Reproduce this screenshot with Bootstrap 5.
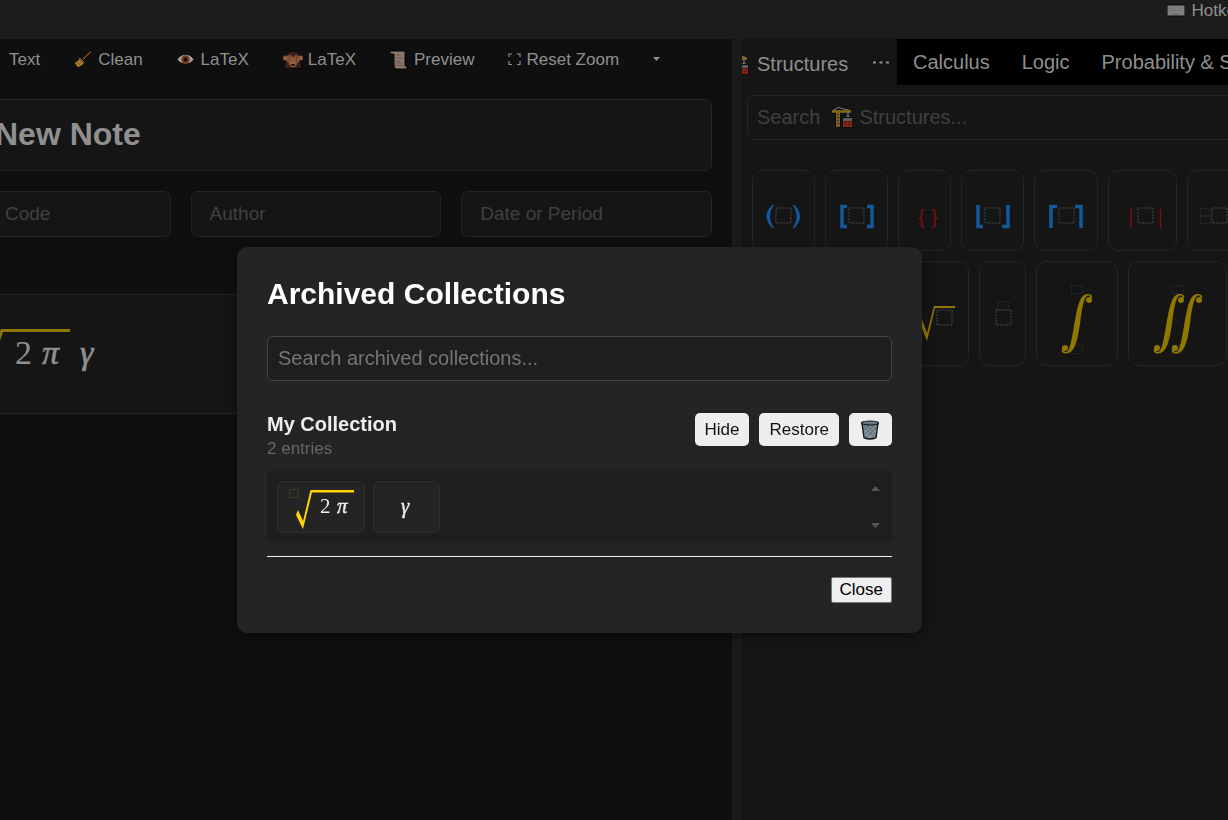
<!DOCTYPE html>
<html lang="en" data-bs-theme="dark">
<head>
<meta charset="utf-8">
<meta name="viewport" content="width=device-width, initial-scale=1">
<title>New Note</title>
<link href="https://cdn.jsdelivr.net/npm/bootstrap@5.3.0/dist/css/bootstrap.min.css" rel="stylesheet">
<style>
  body { background: #0f0f0f; color: #8f8f8f; font-family: "Liberation Sans", Arial, sans-serif; font-size: 17px; line-height: 20px; }
  button, input { font-family: inherit; }
  svg { display: block; flex: none; }
  .topbar { background: #1c1c1c; height: 39px; padding-top: 1px; }
  .hotkeys { color: #8f8f8f; margin-right: -25px; gap: 7px; }
  .editor { flex: 601 1 0; min-width: 0; }
  .splitter { width: 10px; background: #1a1a1a; }
  .library { flex: 399 1 0; min-width: 0; background: #151515; }
  .toolbar { height: 60px; padding: 11px 0 0 9px; gap: 34px; }
  .tool { border: 0; padding: 0; background: none; color: #8f8f8f; gap: 5px; font-size: 17px; line-height: 20px; white-space: nowrap; }
  .note { margin: 0 20px 0 -20px; }
  .field { background: #151515; border: 1px solid #242424; border-radius: 7px; color: #8f8f8f; min-width: 0; }
  .field::placeholder { color: #404040; opacity: 1; }
  .note-title { height: 72px; padding: 0 14px 2px; font-size: 32px; font-weight: 700; }
  .meta { display: grid; grid-template-columns: 19fr 25fr 25fr; gap: 20px; margin: 20px 0 57px; }
  .meta .field { height: 46px; padding: 0 18px; font-size: 19px; }
  .meta .field:first-child { padding-left: 24px; }
  .formula { height: 120px; background: #151515; border: 1px solid #242424; padding-left: 19px; }
  .mathtext { font-family: "Liberation Serif", serif; }
  .tabs { background: #000; height: 46px; }
  .tab { border: 0; padding: 0 16px; background: none; color: #8f8f8f; font-size: 20px; line-height: 46px; white-space: nowrap; }
  .tab-current { background: #151515; width: 155px; padding: 4px 0 0; gap: 8px; }
  .lookup { padding: 10px 0 30px 5px; margin-right: -10px; }
  .lookup .field { height: 45px; padding: 0 10px; font-size: 20px; }
  .hint { position: absolute; inset: 10px auto 32px 15px; color: #404040; font-size: 20px; gap: 7px; pointer-events: none; }
  .tiles { gap: 10px; padding-left: 10px; margin-bottom: 10px; overflow: hidden; }
  .tile { border: 1px solid #242424; border-radius: 10px; background: none; padding: 0; flex: none; }
  .slot { fill: none; stroke: #2c2c2c; stroke-width: 2; stroke-dasharray: 2 1; }
  .slot-sm { fill: none; stroke: #272727; stroke-dasharray: 2 1; }
  .blue { fill: none; stroke: #13599a; stroke-width: 3.500; }
  .red { fill: none; stroke: #7a0e12; }
  .gold { fill: none; stroke: #8f7800; }
  .veil { position: fixed; inset: 0; padding: 247px 69px 0 0; }
  .dialog-box { width: 685px; background: #242424; border-radius: 10px; padding: 29px 30px 30px; box-shadow: 0 4px 12px #00000066; color: #eee; }
  .dialog-box h2 { font-size: 30px; line-height: 36px; font-weight: 700; color: #fff; margin: 0 0 24px; }
  .archive-search { height: 45px; background: #1e1e1e; border: 1px solid #444; border-radius: 6px; padding: 0 10px; font-size: 20px; color: #eee; }
  .archive-search::placeholder { color: #757575; opacity: 1; }
  .entry-head { margin-top: 31px; height: 59px; }
  .entry-head h3 { font-size: 20px; line-height: 24px; font-weight: 700; margin: 0; color: #eee; }
  .count { color: #666; line-height: 26px; }
  .actions { gap: 10px; padding-top: 1px; }
  .light { border: 0; border-radius: 5px; background: #eee; color: #111; height: 33px; padding: 0 10px; line-height: 33px; }
  .entries { background: #1e1e1e; border-radius: 5px; padding: 10px; gap: 8px; }
  .entry { background: #242424; border: 1px solid #2d2d2d; border-radius: 5px; height: 52px; padding: 0; color: #eee; }
  .rule { border-top: 1px solid #eee; margin: 13px 0 20px; }
  .close-btn { background: #efefef; color: #000; border: 1px solid #767676; border-radius: 2px; height: 26px; padding: 0 8px; line-height: 22px; }
</style>
<script src="https://cdn.jsdelivr.net/npm/bootstrap@5.3.0/dist/js/bootstrap.bundle.min.js"></script>
</head>
<body class="vh-100 overflow-hidden d-flex flex-column">
<svg width="0" height="0" class="position-absolute" aria-hidden="true">
  <symbol id="crane" viewBox="0 0 22 22">
    <path d="M0 5 6 1H10L20 3V7H10V22H4V8L0 7z" fill="#090909"/>
    <path d="M1.500 5 7 1.500 19 4.500" stroke="#8a8a8a" fill="none"/>
    <path d="M1 5.500H20" stroke="#8a6a18" stroke-width="2.500"/>
    <path d="M7 4V21" stroke="#7d6018" stroke-width="4"/>
    <path d="M7 8v1M7 11v1M7 14v1M7 17v1" stroke="#2c220c" stroke-width="1.500"/>
    <path d="M17 6v4M14 12l3-2 3 2" stroke="#888" fill="none"/>
    <path d="M11 11h11v11H11z" fill="#0a0a0a"/><path d="M12 12h9v3h-9z" fill="#5c5c5c"/>
    <path d="M12 15.500h9V21h-9z" fill="#962817"/><path d="M15 15v6M18 15v6M12 18h9" stroke="#5e1b12"/>
  </symbol>
</svg>

<header class="topbar d-flex justify-content-end overflow-hidden flex-shrink-0">
  <a href="#" class="hotkeys d-flex text-nowrap text-decoration-none">
    <svg width="18" height="20" viewBox="0 0 18 20"><rect y="4" width="18" height="11" rx="1" fill="#808080" stroke="#0c0c0c"/><path d="M2 7h14M2 9.500h14" stroke="#666" stroke-dasharray="1 1"/><path d="M6 13h6" stroke="#606060"/></svg>
    <span>Hotkeys</span>
  </a>
</header>

<div class="d-flex flex-grow-1 overflow-hidden">
  <main class="editor overflow-hidden">
    <div class="toolbar d-flex align-items-start">
      <button class="tool">Text</button>
      <button class="tool d-flex"><svg width="19" height="20" viewBox="0 0 19 20"><path d="M8 10 17.500 1" stroke="#050505" stroke-width="4"/><path d="M8 10 17 1.500" stroke="#6a4020" stroke-width="1.800"/><path d="m6 7 5 5-2 3-5 3-4-5 4-3z" fill="#a3782c" stroke="#050505"/><path d="m5 8 5 5" stroke="#664914" stroke-width="1.500"/><path d="M3 12l3 3" stroke="#7c591d"/></svg>Clean</button>
      <button class="tool d-flex"><svg width="19" height="20" viewBox="0 0 19 20"><path d="M0 9.500C4 2.500 13 2.500 17 9.500 13 15.500 4 15.500 0 9.500z" fill="#a2a2a2" stroke="#050505"/><circle cx="8.500" cy="9.500" r="4.200" fill="#7d3a17"/><circle cx="8.500" cy="9.500" r="1.900" fill="#080808"/></svg>LaTeX</button>
      <button class="tool d-flex"><svg width="20" height="20" viewBox="0 0 20 20"><path d="M3 4Q10-2 17 4l1 10 1 4-5 1-4-1-4 1-5-1 1-4z" fill="#3a211a" stroke="#050505"/><circle cx="2.500" cy="8" r="2.500" fill="#915b42"/><circle cx="17.500" cy="8" r="2.500" fill="#915b42"/><ellipse cx="10" cy="12.500" rx="4" ry="5" fill="#965f44"/><path d="M4 6.500q3-3 5.500 0l-.5 5-3 2-2-2zM16 6.500q-3-3-5.500 0l.5 5 3 2 2-2z" fill="#8a5238"/><path d="M6.500 6v5M13.500 6v5" stroke="#6c3f2b"/><path d="M8 15h4" stroke="#2c1510" stroke-width="2"/></svg>LaTeX</button>
      <button class="tool d-flex"><svg width="19" height="20" viewBox="0 0 19 20"><path d="M0 1h15v15h2v3H5l-1-3V4H0z" fill="#8a766b" stroke="#050505"/><path d="M3 3v1M5 15.500h10M6 5h5M6 8h7M6 11h4M6 13h6" fill="none" stroke="#6b5a50"/></svg>Preview</button>
      <button class="tool d-flex"><svg width="13" height="20" viewBox="0 0 13 20"><path d="M1 7V4h3M9 4h3v3M12 11v3.500H9M4 14.500H1V11" fill="none" stroke="#8f8f8f" stroke-width="1.200"/></svg>Reset Zoom</button>
      <button class="tool" aria-label="More"><svg width="8" height="20" viewBox="0 0 8 20"><path d="M0 7h7l-3.500 4z" fill="#8f8f8f"/></svg></button>
    </div>
    <form class="note">
      <input class="field note-title w-100 d-block" aria-label="Title" value="New Note">
      <div class="meta">
        <input class="field" placeholder="Code" aria-label="Code">
        <input class="field" placeholder="Author" aria-label="Author">
        <input class="field" placeholder="Date or Period" aria-label="Date or Period">
      </div>
      <div class="formula">
        <svg width="130" height="118" viewBox="0 0 130 118"><path d="M-8 64 2 35.500H70" class="gold" stroke-width="3"/><g class="mathtext" font-size="34" fill="#8f8f8f"><text x="15" y="69">2</text><g font-style="italic" stroke="#8f8f8f" stroke-width=".6"><text x="42" y="69">π</text><text x="80" y="69">γ</text></g></g></svg>
      </div>
    </form>
  </main>
  <div class="splitter flex-shrink-0"></div>
  <aside class="library overflow-hidden">
    <nav class="tabs d-flex overflow-hidden">
      <button class="tab tab-current d-flex align-items-center flex-shrink-0 overflow-hidden"><svg width="7" height="22" viewBox="15 0 7 22"><use href="#crane" width="22" height="22"/></svg><span>Structures</span><svg class="ms-auto me-2" width="16" height="20" viewBox="0 0 16 20"><path d="M0 8.500h3M6.500 8.500h3M13 8.500h3" stroke="#8f8f8f" stroke-width="2"/></svg></button>
      <button class="tab">Calculus</button>
      <button class="tab">Logic</button>
      <button class="tab">Probability &amp; Statistics</button>
    </nav>
    <div class="lookup position-relative">
      <input id="find" class="field w-100 d-block">
      <label for="find" class="hint d-flex align-items-center text-nowrap">Search <svg class="ms-1" width="21" height="22" viewBox="0 0 21 22"><use href="#crane" width="22" height="22"/></svg> Structures...</label>
    </div>
    <div class="tiles d-flex">
      <button class="tile" aria-label="Parentheses"><svg width="61" height="79"><path d="M21 34h-2q-11 11.500 0 23h2q-8-11.500 0-23zM39.500 34h2q11 11.500 0 23h-2q8-11.500 0-23z" fill="#13599a"/><rect class="slot" x="23" y="37" width="15" height="15"/></svg></button>
      <button class="tile" aria-label="Brackets"><svg width="61" height="79"><path class="blue" d="M21 35.500h-5v20h5M41 35.500h5v20h-5"/><rect class="slot" x="23" y="37" width="15" height="15"/></svg></button>
      <button class="tile" aria-label="Braces"><svg width="51" height="79"><g font-family="Liberation Sans" font-size="20" fill="#7a0e12"><text x="19" y="53">{</text><text x="32" y="53">}</text></g></svg></button>
      <button class="tile" aria-label="Floor"><svg width="61" height="79"><path class="blue" d="M16 34v21.500h5M46 34v21.500h-6"/><rect class="slot" x="23" y="37" width="15" height="15"/></svg></button>
      <button class="tile" aria-label="Ceiling"><svg width="62" height="79"><path class="blue" d="M16 57V35.500h6M46 57V35.500h-6"/><rect class="slot" x="24" y="37" width="15" height="15"/></svg></button>
      <button class="tile" aria-label="Absolute value"><svg width="67" height="79"><path class="red" d="M22 38v19M51.500 38v19" stroke-width="1.500"/><rect class="slot" x="29" y="37" width="15" height="15"/></svg></button>
      <button class="tile" aria-label="Indexed"><svg width="85" height="79"><rect class="slot-sm" x="12.500" y="37.500" width="10" height="7"/><rect class="slot-sm" x="12.500" y="45.500" width="10" height="7"/><rect class="slot" x="24" y="37" width="15" height="15"/></svg></button>
    </div>
    <div class="tiles d-flex">
      <button class="tile" aria-label="Fraction"><svg width="115" height="103"><rect class="slot" x="50" y="37" width="15" height="15"/></svg></button>
      <button class="tile" aria-label="Root"><svg width="88" height="103"><path d="m39 59 3-2 5 14 7-27h21v2H55l-8 33z" fill="#8f7800"/><rect class="slot" x="57" y="48" width="15" height="15"/></svg></button>
      <button class="tile" aria-label="Accent"><svg width="45" height="103"><rect class="slot-sm" x="17.500" y="39.500" width="11" height="8"/><rect class="slot" x="16" y="48" width="15" height="15"/></svg></button>
      <button class="tile" aria-label="Integral"><svg width="80" height="103"><rect class="slot-sm" x="34.500" y="23.500" width="11" height="8"/><rect class="slot-sm" x="34.500" y="83.500" width="11" height="8"/><g id="integral" fill="#8f7800"><path d="M29 91.500C37 91 40 82 43 62 45 45 47 36 50 34c2-1 3 0 3 1l2 1c1-3-2-4-4-4C43 32 41 42 37 64 34 82 32 90 29 90c-2 0-2-1-2-2l-2-1c-1 3 1 4.500 4 4.500z"/><circle cx="28" cy="86" r="3"/><circle cx="52" cy="38" r="3"/></g></svg></button>
      <button class="tile" aria-label="Double integral"><svg width="97" height="103"><rect class="slot-sm" x="43.500" y="23.500" width="11" height="8"/><rect class="slot-sm" x="43.500" y="83.500" width="11" height="8"/><use href="#integral"/><use href="#integral" x="18"/></svg></button>
    </div>
  </aside>
</div>

<div class="veil d-flex justify-content-center align-items-start">
  <section class="dialog-box" role="dialog" aria-labelledby="archive-title">
    <h2 id="archive-title">Archived Collections</h2>
    <input class="archive-search w-100 d-block" placeholder="Search archived collections..." aria-label="Search archived collections">
    <div class="entry-head d-flex align-items-start">
      <div class="me-auto"><h3>My Collection</h3><div class="count">2 entries</div></div>
      <div class="actions d-flex">
        <button class="light">Hide</button>
        <button class="light">Restore</button>
        <button class="light" aria-label="Delete"><svg width="23" height="20" viewBox="0 0 23 20"><path d="M3 3 5 17.500q6 3 12 0L19 3z" fill="#82939b" stroke="#161a1c" stroke-width="1.500"/><path d="m5 6 11 12M8 5l9 10M12 5l6 6M18 6 7 18M15 5 6 14M11 5 5 10" stroke="#5a6970"/><ellipse cx="11" cy="3" rx="8.500" ry="2" fill="#667981" stroke="#161a1c" stroke-width="1.200"/></svg></button>
      </div>
    </div>
    <div class="entries d-flex">
      <button class="entry"><svg width="86" height="50" viewBox="0 0 86 50"><rect x="11.500" y="7.500" width="9" height="8" fill="none" stroke="#5b501e" stroke-dasharray="1 1"/><path d="m18 33 2-5 5 11 7.500-31H76v2.500H34L25 47z" fill="#ffd500"/><g class="mathtext" font-size="21" fill="#eee"><text x="42" y="31">2</text><text x="59" y="31" font-style="italic" stroke="#eee" stroke-width=".4">π</text></g></svg></button>
      <button class="entry"><svg width="65" height="50" viewBox="0 0 65 50"><text class="mathtext" x="27" y="31" font-size="21" font-style="italic" fill="#eee" stroke="#eee" stroke-width=".4">γ</text></svg></button>
      <svg class="ms-auto" width="14" height="52" viewBox="0 0 14 52"><path d="m3 10 4.500-5 4.500 5zM3 42l4.500 5 4.500-5z" fill="#555"/></svg>
    </div>
    <div class="rule"></div>
    <div class="d-flex justify-content-end"><button class="close-btn">Close</button></div>
  </section>
</div>
</body>
</html>
